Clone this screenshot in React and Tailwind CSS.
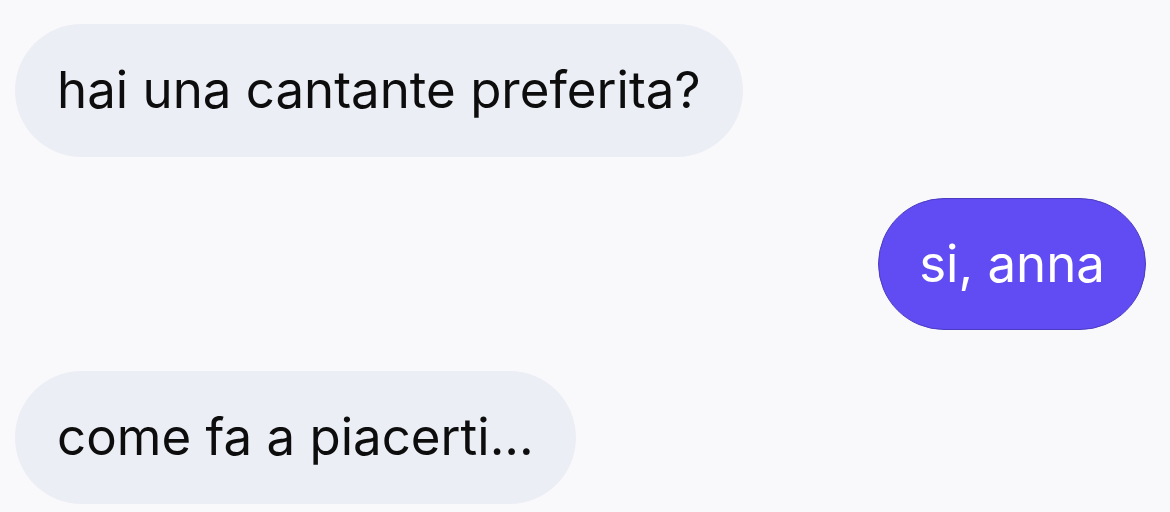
const messages = [
  { text: "hai una cantante preferita?", mine: false },
  { text: "si, anna", mine: true },
  { text: "come fa a piacerti...", mine: false },
];

export default function App() {
  return (
    <div className="w-[1170px] h-[512px] bg-[#f9f9fc] overflow-hidden font-['Inter',sans-serif]">
      <div className="flex flex-col gap-[41px] pt-[24px] pl-[15px] pr-[24px]">
        {messages.map((m, i) =>
          m.mine ? (
            <div key={i} className="flex justify-end">
              <div className="h-[132px] px-[40px] rounded-full bg-[#614bf2] border border-[#4b3bc0] text-white text-[51px] flex items-center">
                {m.text}
              </div>
            </div>
          ) : (
            <div key={i} className="flex justify-start">
              <div className="h-[133px] px-[42px] rounded-full bg-[#eceef5] text-[#0d0d0d] text-[51px] flex items-center">
                {m.text}
              </div>
            </div>
          )
        )}
      </div>
    </div>
  );
}
